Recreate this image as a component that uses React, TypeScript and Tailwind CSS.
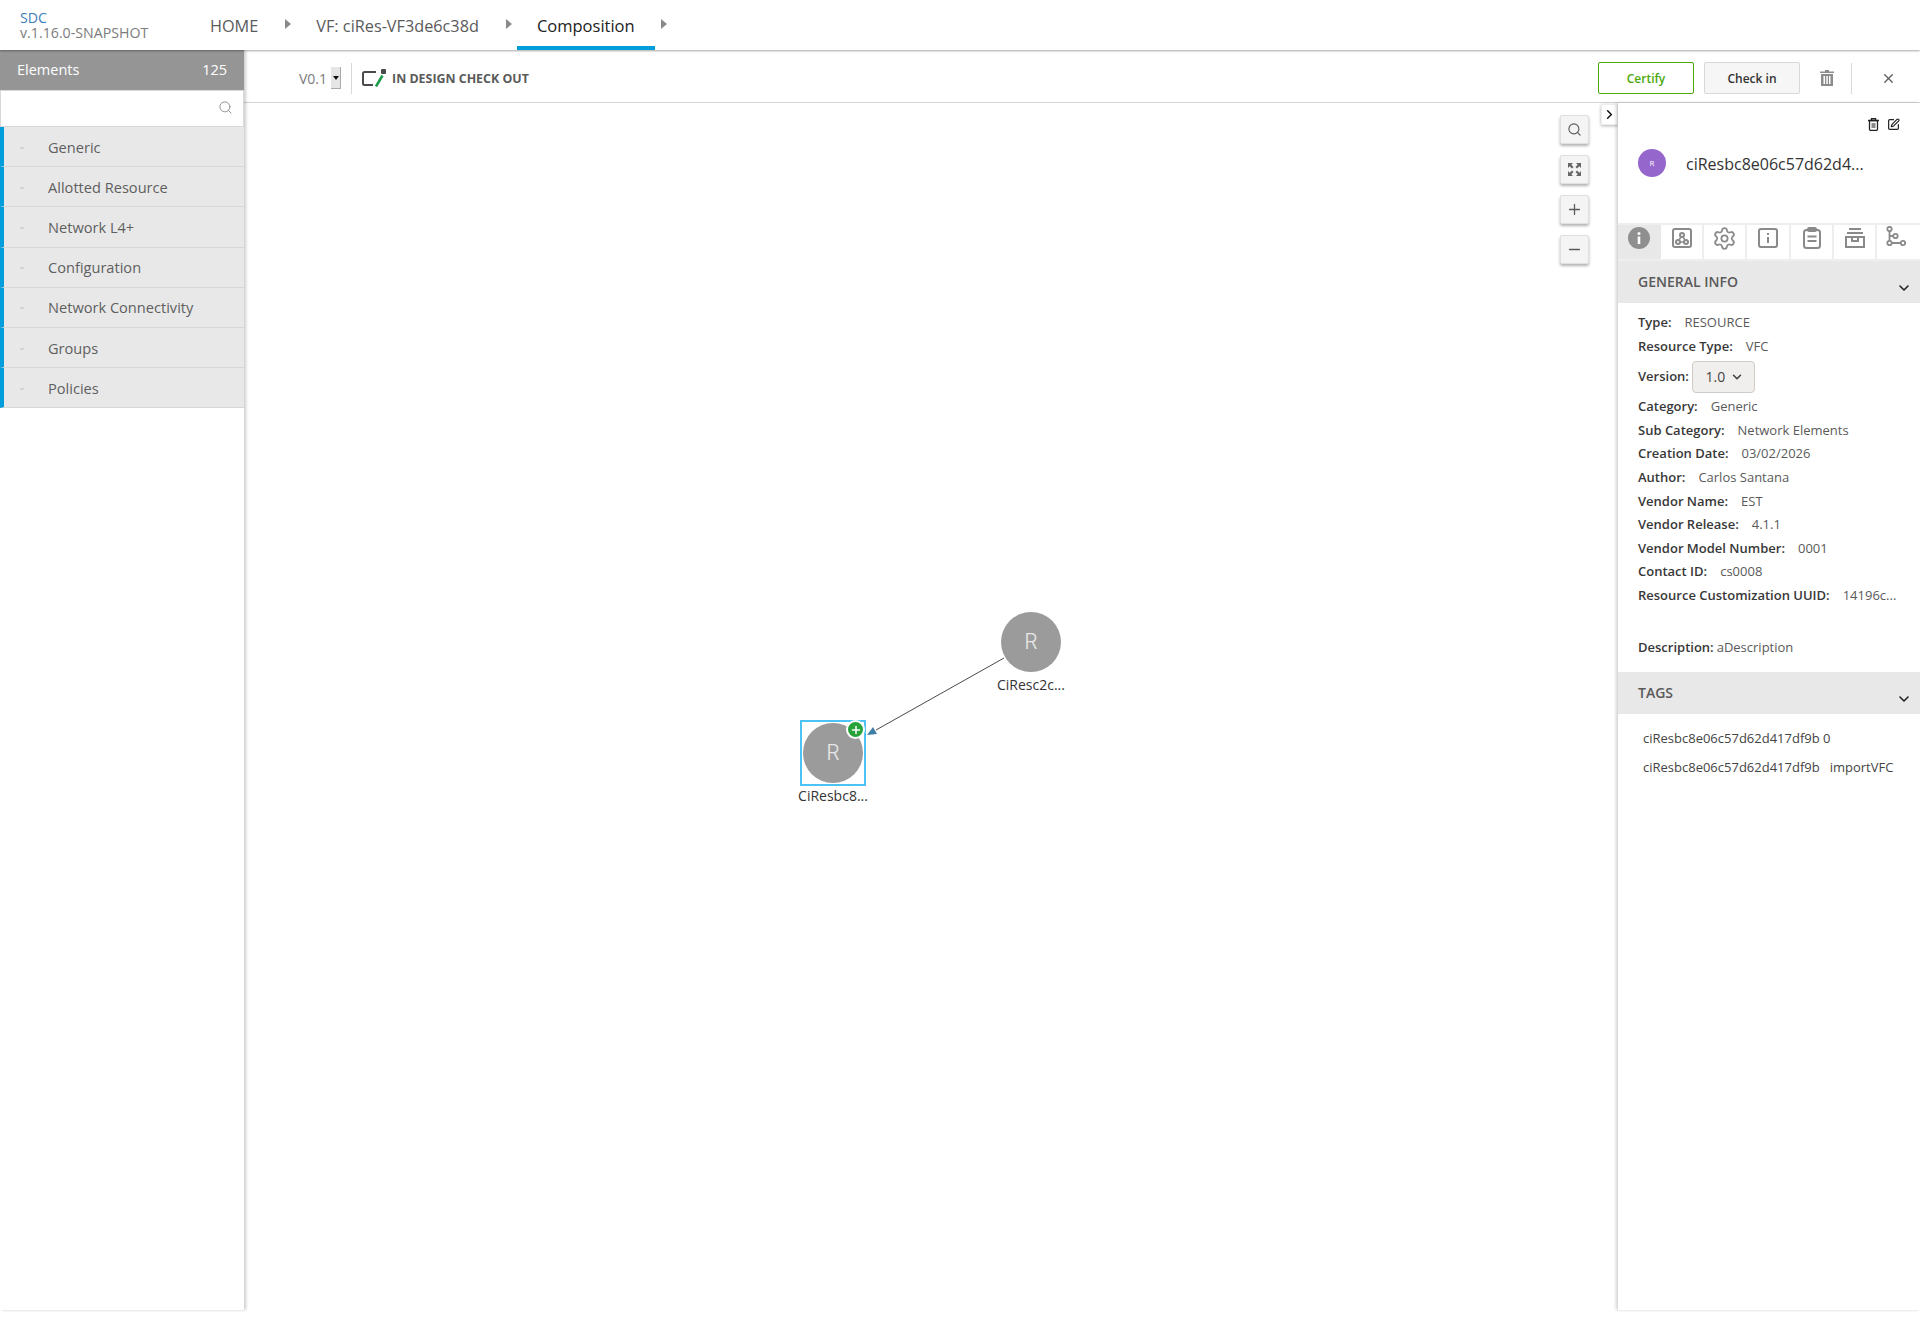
import React from "react";
import { ChevronDown, ChevronRight, Minus, Plus, Search, Settings, SquarePen, X } from "lucide-react";

const groups = ["Generic", "Allotted Resource", "Network L4+", "Configuration", "Network Connectivity", "Groups", "Policies"];

const infoRows: [string, string][] = [
  ["Category:", "Generic"],
  ["Sub Category:", "Network Elements"],
  ["Creation Date:", "03/02/2026"],
  ["Author:", "Carlos Santana"],
  ["Vendor Name:", "EST"],
  ["Vendor Release:", "4.1.1"],
  ["Vendor Model Number:", "0001"],
  ["Contact ID:", "cs0008"],
  ["Resource Customization UUID:", "14196c..."],
];

const NavArrow = () => (
  <svg width="6" height="10" viewBox="0 0 6 10" className="mt-[-4px]">
    <path d="M0 0l6 5-6 5z" fill="#8a8a8a" />
  </svg>
);

const InfoRow = ({ label, value }: { label: string; value: string }) => (
  <div className="h-[23.6px] leading-[23.6px] whitespace-nowrap">
    <span className="font-semibold text-[#383838]">{label}</span>
    <span className="ml-[13px] text-[#5a5a5a]">{value}</span>
  </div>
);

const ZoomButton = ({ children }: { children: React.ReactNode }) => (
  <button className="flex h-[29px] w-[29px] items-center justify-center rounded-[2px] border border-[#e0e0e0] bg-[#f4f4f4] text-[#5a5a5a] shadow-[0_2px_3px_rgba(0,0,0,0.3)]">
    {children}
  </button>
);

const Node = ({ cx, cy, label, selected }: { cx: number; cy: number; label: string; selected?: boolean }) => (
  <div className="absolute h-0 w-0" style={{ left: cx, top: cy }}>
    {selected && <div className="absolute left-[-33px] top-[-33px] h-[66px] w-[66px] border-2 border-[#4cc3f2]" />}
    <div className="absolute left-[-30px] top-[-30px] flex h-[60px] w-[60px] items-center justify-center rounded-full bg-[#9b9b9b] font-['Inter',sans-serif] text-[21px] font-light text-[#e6e6e6]">
      R
    </div>
    {selected && (
      <div className="absolute left-[13px] top-[-33px] flex h-[19px] w-[19px] items-center justify-center rounded-full border-2 border-white bg-[#27a33a] text-white">
        <Plus size={12} strokeWidth={3} />
      </div>
    )}
    <div className="absolute left-[-50px] top-[34px] w-[100px] text-center text-[14px] leading-[18px] whitespace-nowrap text-[#333]">{label}</div>
  </div>
);

const App = () => {
  return (
    <div className="h-[1319px] w-[1920px] overflow-hidden bg-white font-['Open_Sans',sans-serif]">
      <header className="relative z-20 flex h-[50px] items-center bg-white shadow-[0_1px_2px_rgba(0,0,0,0.35)]">
        <div className="ml-[20px] w-[190px] text-[14.2px] leading-[15px]">
          <div className="text-[#3d7fb8]">SDC</div>
          <div className="text-[#7c7c7c]">v.1.16.0-SNAPSHOT</div>
        </div>
        <nav className="flex h-full items-center pt-[2px] text-[16.25px]">
          <span className="text-[#5a5a5a]">HOME</span>
          <span className="ml-[27px] mr-[25px]"><NavArrow /></span>
          <span className="text-[#5a5a5a]">VF: ciRes-VF3de6c38d</span>
          <span className="ml-[27px] mr-[5px]"><NavArrow /></span>
          <span className="flex h-[48px] items-center self-start border-y-[4px] border-t-transparent border-b-[#009fdb] px-[20px] text-[16.5px] text-[#222]">Composition</span>
          <span className="ml-[6px]"><NavArrow /></span>
        </nav>
      </header>

      <div className="flex h-[1260px]">
        <aside className="relative z-10 w-[244px] shrink-0 bg-white shadow-[2px_0_3px_rgba(0,0,0,0.2)]">
          <div className="flex h-[40px] items-center justify-between bg-[#959595] pb-[1px] pl-[17px] pr-[17px] text-[14.5px] text-white">
            <span>Elements</span>
            <span>125</span>
          </div>
          <div className="flex h-[37px] items-center justify-end border border-[#d8d8d8] bg-white pr-[10px] pb-[3px] text-[#8c8c8c]">
            <Search size={15} strokeWidth={1.5} />
          </div>
          {groups.map((group) => (
            <div key={group} className="flex h-[40.2px] items-center border-b border-l-[4px] border-b-[#d8d8d8] border-l-[#009fdb] bg-[#e8e8e8] pt-[2px] text-[14.6px] text-[#5f5f5f]">
              <ChevronDown size={6} className="ml-[15px] mr-[23px] text-[#8c8c8c]" />
              <span>{group}</span>
            </div>
          ))}
        </aside>

        <main className="flex min-w-0 flex-1 flex-col">
          <div className="flex h-[53px] shrink-0 items-center border-b border-[#d4d4d4] bg-white pt-[4px]">
            <span className="ml-[55px] text-[14px] text-[#7a7a7a]">V0.1</span>
            <span className="ml-[4px] flex h-[22px] w-[10px] items-center justify-center border-r border-b border-[#aaa] bg-[#e6e6e6]">
              <svg width="6" height="4" viewBox="0 0 6 4"><path d="M0 0h6L3 4z" fill="#111" /></svg>
            </span>
            <span className="ml-[10px] h-[31px] border-l border-[#d8d8d8]" />
            <svg width="24" height="18" viewBox="0 0 24 18" className="ml-[10px]">
              <path d="M14 3H2.500a1.500 1.500 0 0 0-1.500 1.500v10a1.500 1.500 0 0 0 1.500 1.500H11" fill="none" stroke="#4a4a4a" strokeWidth="2" />
              <rect x="19" y="0" width="5" height="5" rx="1" fill="#4a4a4a" />
              <path d="M14 17.500L20.500 6.500" stroke="#1f9d4d" strokeWidth="2.600" />
            </svg>
            <span className="ml-[6px] pt-[2px] text-[12.4px] font-bold text-[#5a5a5a]">IN DESIGN CHECK OUT</span>
            <div className="flex-1" />
            <button className="h-[32px] w-[96px] rounded-[2px] border border-[#4ca90c] bg-white pt-[2px] text-[12px] font-semibold text-[#4ca90c]">Certify</button>
            <button className="ml-[10px] h-[32px] w-[96px] rounded-[2px] border border-[#d8d8d8] bg-[#f6f6f6] pt-[2px] text-[12px] font-semibold text-[#333]">Check in</button>
            <svg width="14" height="16" viewBox="0 0 14 16" fill="#8c8c8c" className="ml-[20px]">
              <path d="M5 0h4v1.500h5V3H0V1.500h5zM1 4h12v12H1zM3.500 6v8h1.500V6zM6.300 6v8h1.500V6zM9 6v8h1.500V6z" fillRule="evenodd" />
            </svg>
            <span className="ml-[17px] h-[31px] border-l border-[#d8d8d8]" />
            <X size={15} className="ml-[29px] mr-[24px] text-[#5a5a5a]" />
          </div>

          <div className="flex min-h-0 flex-1">
            <div className="relative min-w-0 flex-1">
              <div className="absolute right-[29px] top-[12px] flex flex-col gap-[11px]">
                <ZoomButton><Search size={15} strokeWidth={1.8} /></ZoomButton>
                <ZoomButton>
                  <svg width="15" height="15" viewBox="0 0 15 15" fill="#666">
                    <path d="M1 1h5L4.300 2.700 6.500 5 5 6.500 2.700 4.300 1 6zM14 1v5l-1.700-1.700L10 6.500 8.500 5l2.200-2.300L9 1zM1 14V9l1.700 1.700L5 8.500 6.500 10l-2.200 2.300L6 14zM14 14H9l1.700-1.700L8.500 10 10 8.500l2.300 2.200L14 9z" />
                  </svg>
                </ZoomButton>
                <ZoomButton><Plus size={17} strokeWidth={1.8} /></ZoomButton>
                <ZoomButton><Minus size={17} strokeWidth={1.8} /></ZoomButton>
              </div>
              <svg width="1374" height="1207" className="absolute left-0 top-0" fill="none">
                <line x1="760" y1="555" x2="632" y2="627" stroke="#4a4a4a" strokeWidth="1" />
                <path d="M623 632l6-8 4 7z" fill="#3f7ea6" />
              </svg>
              <Node cx={787} cy={539} label="CiResc2c..." />
              <Node cx={589} cy={650} label="CiResbc8..." selected />
              <button className="absolute right-0 top-[1px] flex h-[21px] w-[17px] items-center justify-center border border-[#eee] bg-white shadow-[0_1px_3px_rgba(0,0,0,0.3)]">
                <ChevronRight size={15} strokeWidth={2.4} className="text-[#111]" />
              </button>
            </div>

            <section className="relative w-[302px] shrink-0 bg-white text-[13px] shadow-[-2px_0_3px_rgba(0,0,0,0.18)]">
              <div className="flex h-[120px] flex-col">
                <div className="mt-[15px] flex items-center justify-end gap-[8px] pr-[20px] text-[#222]">
                  <svg width="11" height="13" viewBox="0 0 11 13" fill="none" stroke="#222" strokeWidth="1.300">
                    <path d="M0 2.500h11M3.500 2.500V.7h4v1.800" />
                    <rect x="1.500" y="2.500" width="8" height="9.800" rx="1" />
                    <rect x="3.500" y="5" width="4" height="5" fill="#888" stroke="none" />
                  </svg>
                  <SquarePen size={13} strokeWidth={2.200} />
                </div>
                <div className="mt-[18px] flex items-center pl-[20px]">
                  <span className="flex h-[28px] w-[28px] items-center justify-center rounded-full bg-[#9566cc] text-[8px] text-white">R</span>
                  <span className="ml-[20px] mt-[1px] text-[16px] text-[#333]">ciResbc8e06c57d62d4...</span>
                </div>
              </div>
              <div className="flex h-[38px] border-y-2 border-t-[#eee] border-b-[#eee]">
                <div className="flex w-[43px] items-start justify-center bg-[#e8e8e8] pr-[1px] pt-[2px]">
                  <svg width="22" height="22" viewBox="0 0 22 22">
                    <circle cx="11" cy="11" r="11" fill="#8f8f8f" />
                    <rect x="9.700" y="9.500" width="2.600" height="7.500" fill="#fff" />
                    <circle cx="11" cy="6.500" r="1.500" fill="#fff" />
                  </svg>
                </div>
                <div className="flex w-[43px] items-start justify-center border-r-2 border-[#eee] pt-[3px]">
                  <svg width="20" height="20" viewBox="0 0 20 20" fill="none" stroke="#8a8a8a" strokeWidth="2">
                    <rect x="1" y="1" width="18" height="18" rx="2" />
                    <circle cx="10" cy="7" r="2" />
                    <circle cx="6" cy="14" r="2" />
                    <circle cx="14" cy="14" r="2" />
                    <path d="M9 9l-2 3M11 9l2 3M8 14h4" strokeWidth="1.500" />
                  </svg>
                </div>
                <div className="flex w-[43px] items-start justify-center border-r-2 border-[#eee] pt-[1px]">
                  <Settings size={25} strokeWidth={1.700} className="text-[#8a8a8a]" />
                </div>
                <div className="flex w-[44px] items-start justify-center border-r-2 border-[#eee] pt-[3px]">
                  <svg width="20" height="20" viewBox="0 0 20 20" fill="none" stroke="#8a8a8a" strokeWidth="2">
                    <rect x="1" y="1" width="18" height="18" rx="2" />
                    <path d="M10 9v6M10 5v2" />
                  </svg>
                </div>
                <div className="flex w-[43px] items-start justify-center border-r-2 border-[#eee] pt-[2px]">
                  <svg width="18" height="22" viewBox="0 0 18 22" fill="none" stroke="#8a8a8a" strokeWidth="2">
                    <rect x="1" y="3" width="16" height="18" rx="2.500" />
                    <rect x="5" y="1" width="8" height="3" rx="1" fill="#8a8a8a" />
                    <path d="M4.500 9.500h9M4.500 14h9" />
                  </svg>
                </div>
                <div className="flex w-[43px] items-start justify-center border-r-2 border-[#eee] pt-[3px]">
                  <svg width="20" height="20" viewBox="0 0 20 20" fill="none" stroke="#8a8a8a" strokeWidth="2">
                    <path d="M4 1h12M2 5h16" />
                    <path d="M1 9h18v10H1zM7 9v4h6V9" />
                  </svg>
                </div>
                <div className="flex flex-1 items-start pl-[9px] pt-[1px]">
                  <svg width="20" height="22" viewBox="0 0 20 22" fill="none" stroke="#8a8a8a" strokeWidth="1.800">
                    <circle cx="3.500" cy="3" r="2.200" />
                    <circle cx="3.500" cy="17" r="2.200" />
                    <circle cx="9.500" cy="10" r="2.200" />
                    <circle cx="17" cy="17" r="2.200" />
                    <path d="M3.500 5v10M5.700 17h9M3.500 10h3.800" />
                  </svg>
                </div>
              </div>
              <div className="relative flex h-[42px] items-center bg-[#e8e8e8] pb-[2px] pl-[20px] text-[14px] font-semibold text-[#5a5a5a]">
                GENERAL INFO
                <ChevronDown size={16} strokeWidth={2.400} className="absolute right-[8px] top-[19px] text-[#222]" />
              </div>
              <div className="px-[20px] pt-[8px]">
                <InfoRow label="Type:" value="RESOURCE" />
                <InfoRow label="Resource Type:" value="VFC" />
                <div className="flex h-[37px] items-center">
                  <span className="font-semibold text-[#383838]">Version:</span>
                  <span className="ml-[3px] flex h-[32px] w-[63px] items-center justify-center gap-[5px] rounded-[4px] border border-[#cfcbc6] bg-[#f1efed] pl-[3px] text-[14px] text-[#444]">
                    1.0
                    <ChevronDown size={14} strokeWidth={2.800} />
                  </span>
                </div>
                {infoRows.map(([label, value]) => (
                  <InfoRow key={label} label={label} value={value} />
                ))}
                <div className="mt-[27px] h-[25px] leading-[25px] whitespace-nowrap">
                  <span className="font-semibold text-[#383838]">Description:</span>
                  <span className="ml-[3px] text-[#5a5a5a]">aDescription</span>
                </div>
              </div>
              <div className="relative mt-[12px] flex h-[42px] items-center bg-[#e8e8e8] pl-[20px] text-[14px] font-semibold text-[#5a5a5a]">
                TAGS
                <ChevronDown size={16} strokeWidth={2.400} className="absolute right-[8px] top-[19px] text-[#222]" />
              </div>
              <div className="pl-[25px] pt-[10px] leading-[29px] text-[#444]">
                <div>ciResbc8e06c57d62d417df9b 0</div>
                <div>ciResbc8e06c57d62d417df9b<span className="ml-[10px]">importVFC</span></div>
              </div>
            </section>
          </div>
        </main>
      </div>
    </div>
  );
};

export default App;
